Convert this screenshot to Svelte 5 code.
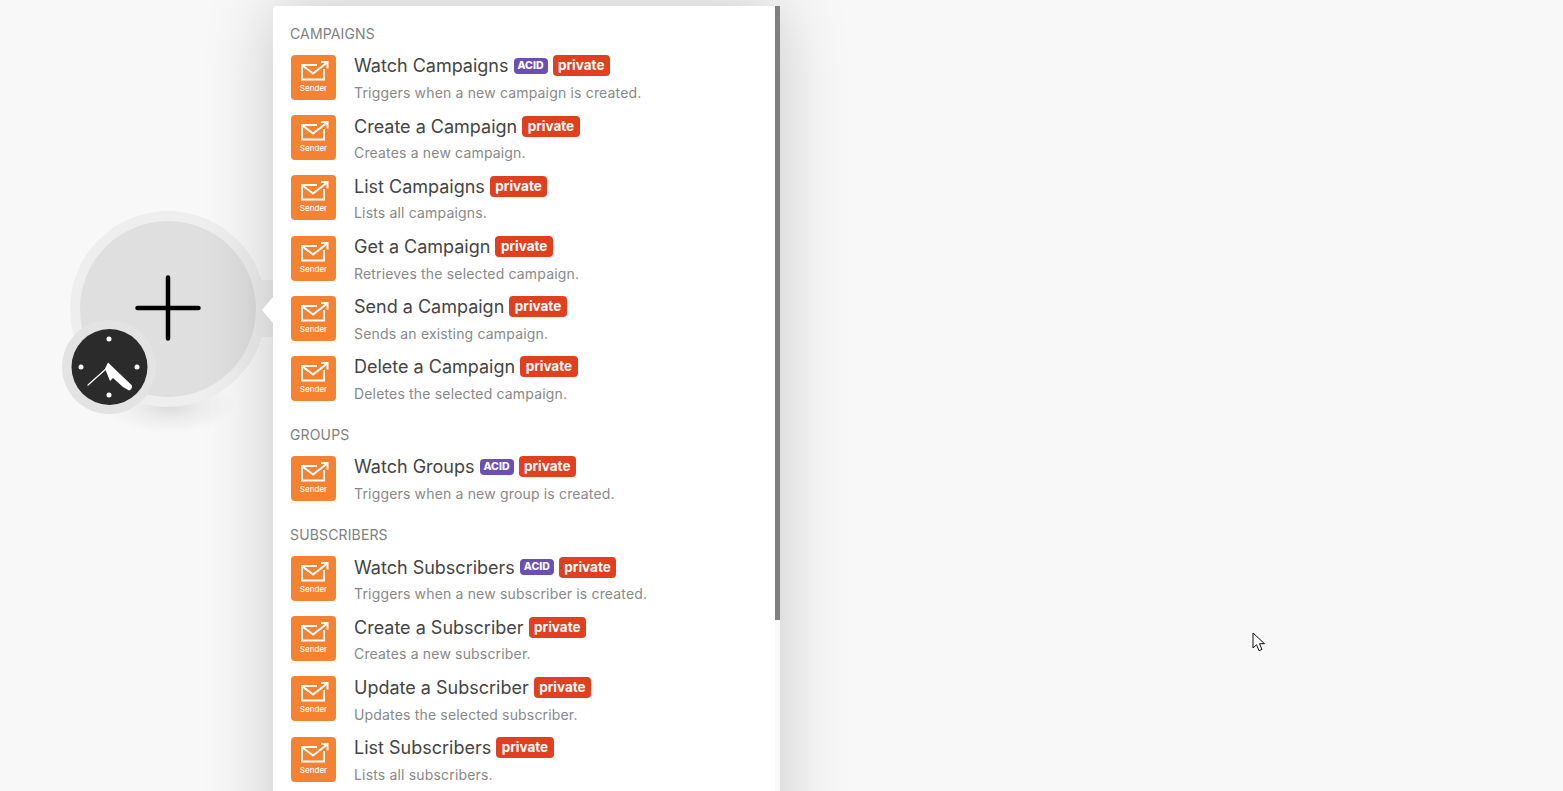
<script>
	const sections = [
		{
			title: 'CAMPAIGNS',
			items: [
				{ name: 'Watch Campaigns', desc: 'Triggers when a new campaign is created.', acid: true },
				{ name: 'Create a Campaign', desc: 'Creates a new campaign.' },
				{ name: 'List Campaigns', desc: 'Lists all campaigns.' },
				{ name: 'Get a Campaign', desc: 'Retrieves the selected campaign.' },
				{ name: 'Send a Campaign', desc: 'Sends an existing campaign.' },
				{ name: 'Delete a Campaign', desc: 'Deletes the selected campaign.' }
			]
		},
		{
			title: 'GROUPS',
			items: [{ name: 'Watch Groups', desc: 'Triggers when a new group is created.', acid: true }]
		},
		{
			title: 'SUBSCRIBERS',
			items: [
				{ name: 'Watch Subscribers', desc: 'Triggers when a new subscriber is created.', acid: true },
				{ name: 'Create a Subscriber', desc: 'Creates a new subscriber.' },
				{ name: 'Update a Subscriber', desc: 'Updates the selected subscriber.' },
				{ name: 'List Subscribers', desc: 'Lists all subscribers.' }
			]
		}
	];
</script>

<div class="canvas">
	<svg class="module" width="240" height="260" viewBox="0 0 240 260">
		<defs>
			<radialGradient id="floor">
				<stop offset="0" stop-color="#000" stop-opacity="0.12" />
				<stop offset="0.45" stop-color="#000" stop-opacity="0.05" />
				<stop offset="1" stop-color="#000" stop-opacity="0" />
			</radialGradient>
		</defs>
		<ellipse cx="120" cy="206" rx="66" ry="28" fill="url(#floor)" />
		<path d="M205 80H223V137H205z" fill="#eee" />
		<circle cx="118" cy="109" r="98" fill="#eeeeee" />
		<circle cx="118" cy="109" r="88" fill="#dfdfdf" />
		<path d="M87.500 108h61M118 77.500v61" stroke="#000" stroke-width="4.500" stroke-linecap="round" fill="none" />
		<circle cx="59" cy="167" r="47" fill="#e3e3e3" />
		<circle cx="59.500" cy="167" r="38" fill="#2b2b2b" />
		<g fill="#fff">
			<circle cx="59" cy="139" r="2.500" />
			<circle cx="59" cy="195" r="2.500" />
			<circle cx="31" cy="167" r="2.500" />
			<circle cx="87" cy="167" r="2.500" />
		</g>
		<path d="M57 168L38 185" stroke="#fff" stroke-width="1.200" stroke-linecap="round" />
		<path d="M58 162.500L82 185.500Q82.500 189 79 190.500L73 187L63 178L60 181L55 168.500z" fill="#fff" />
	</svg>

	<div class="popover">
		<span class="arrow"></span>
		<div class="list">
			{#each sections as section}
				<div class="section">
					<h5>{section.title}</h5>
					{#each section.items as item}
						<div class="row">
							<div class="app-icon">
								<svg width="45" height="45" viewBox="0 0 45 45" fill="none" stroke="#fff" stroke-width="2">
									<path d="M26 10H11V24.500H33V14" />
									<path d="M11.500 10.500l10.500 8L35.500 8" />
									<path d="M30 7h6.500v6.500" />
								</svg>
								<span>Sender</span>
							</div>
							<div class="text">
								<div class="name">
									{item.name}
									{#if item.acid}<span class="acid">ACID</span>{/if}
									<span class="private">private</span>
								</div>
								<div class="desc">{item.desc}</div>
							</div>
						</div>
					{/each}
				</div>
			{/each}
		</div>
		<div class="scrollbar"><div class="thumb"></div></div>
	</div>

	<svg class="cursor" width="14" height="21" viewBox="0 0 14 21">
		<path d="M1 1v15l3.500-3.300 2.500 6 3-1.300-2.500-5.700H12.500z" fill="#fff" stroke="#111" stroke-width="1" />
	</svg>
</div>

<style>
	:global(body) {
		margin: 0;
		background: #f8f8f8;
		font-family: Inter, 'Liberation Sans', sans-serif;
	}

	.canvas {
		position: relative;
		height: 100vh;
		overflow: hidden;
		background: #f8f8f8;
	}

	.module {
		position: absolute;
		left: 50px;
		top: 200px;
	}

	.popover {
		position: absolute;
		left: 273px;
		top: 6px;
		width: 507px;
		height: 900px;
		display: flex;
		background: #fff;
		border-radius: 4px 4px 0 0;
		box-shadow: 0 0 70px rgba(0, 0, 0, 0.2);
	}

	.arrow {
		position: absolute;
		left: -11px;
		top: 291px;
		width: 0;
		height: 0;
		border-top: 13px solid transparent;
		border-bottom: 13px solid transparent;
		border-right: 11px solid #fff;
	}

	.list {
		flex: 1;
		min-width: 0;
		padding: 18px 0 0 18px;
	}

	.section + .section {
		margin-top: 16.5px;
	}

	h5 {
		margin: 0 0 3.5px -1px;
		font-size: 14px;
		line-height: 20px;
		font-weight: 400;
		letter-spacing: 0.15px;
		color: #808080;
	}

	.row {
		display: flex;
		align-items: center;
		gap: 18px;
		height: 60.17px;
	}

	.app-icon {
		position: relative;
		flex: none;
		width: 45px;
		height: 45px;
		border-radius: 4px;
		background: #f58230;
	}

	.app-icon svg {
		display: block;
	}

	.app-icon span {
		position: absolute;
		left: 0;
		right: 0;
		top: 27px;
		text-align: center;
		font-size: 8px;
		line-height: 12px;
		font-weight: 500;
		color: #fff;
	}

	.text {
		margin-top: 2px;
	}

	.name {
		display: flex;
		align-items: center;
		gap: 5px;
		height: 24px;
		font-size: 18px;
		color: #444;
	}

	.desc {
		margin-top: 5.2px;
		font-size: 14px;
		line-height: 20px;
		letter-spacing: 0.17px;
		color: #888;
	}

	.acid {
		padding: 0 4px;
		height: 16px;
		line-height: 16px;
		border-radius: 4px;
		background: #6b4fb3;
		color: #fff;
		font-size: 10.500px;
		font-weight: 800;
	}

	.private {
		padding: 0 5.5px;
		height: 21px;
		line-height: 20px;
		border-radius: 4px;
		background: #e0401f;
		color: #fff;
		font-size: 13.500px;
		font-weight: 700;
	}

	.scrollbar {
		flex: none;
		width: 5px;
		background: #f8f8f8;
	}

	.thumb {
		height: 614px;
		background: #808080;
	}

	.cursor {
		position: absolute;
		left: 1252px;
		top: 632px;
	}
</style>
